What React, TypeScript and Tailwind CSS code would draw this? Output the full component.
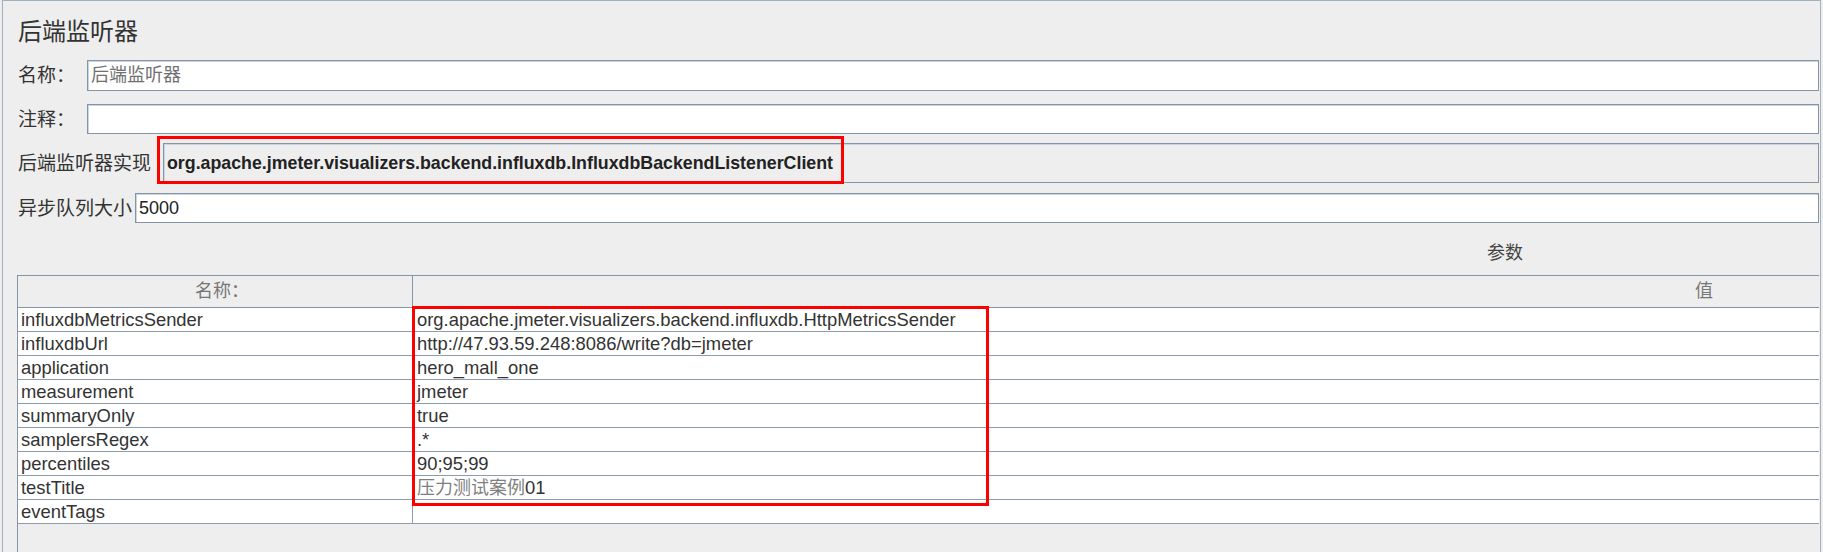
const rows: [string, string][] = [
  ["influxdbMetricsSender", "org.apache.jmeter.visualizers.backend.influxdb.HttpMetricsSender"],
  ["influxdbUrl", "http://47.93.59.248:8086/write?db=jmeter"],
  ["application", "hero_mall_one"],
  ["measurement", "jmeter"],
  ["summaryOnly", "true"],
  ["samplersRegex", ".*"],
  ["percentiles", "90;95;99"],
  ["testTitle", "__CJK__"],
  ["eventTags", ""],
];

const field = "border border-[#8495a7] shadow-[inset_1px_1px_0_#c9d5e1]";

export default function App() {
  return (
    <div className="relative h-[552px] w-[1823px] overflow-hidden bg-[#eeeeee] font-['Liberation_Sans','Noto_Sans_CJK_SC',sans-serif] text-[#333333]">
      <div className="ml-[2px] flex h-full w-[1819px] flex-col border-l border-r border-t border-[#a3b1bf] pl-[15px] pr-[1px]">
        {/* Title */}
        <div className="mt-[15px] flex h-[32px] items-center text-[24px] leading-none text-[#333]">后端监听器</div>

        {/* 名称 */}
        <div className="mt-[12px] flex h-[31px] items-center">
          <span className="w-[69px] text-[19px] leading-none">名称：</span>
          <div className={`flex h-full flex-1 items-center bg-white pl-[3px] text-[18px] text-[#707070] ${field}`}>
            后端监听器
          </div>
        </div>

        {/* 注释 */}
        <div className="mt-[13px] flex h-[30px] items-center">
          <span className="w-[69px] text-[19px] leading-none">注释：</span>
          <div className={`h-full flex-1 bg-white ${field}`} />
        </div>

        {/* 实现 */}
        <div className="mt-[9px] flex h-[40px] items-center">
          <span className="w-[145px] text-[19px] leading-none">后端监听器实现</span>
          <div className={`flex h-full flex-1 items-center bg-[#eeeeee] pl-[3px] text-[17.8px] font-bold text-[#222] ${field}`}>
            org.apache.jmeter.visualizers.backend.influxdb.InfluxdbBackendListenerClient
          </div>
        </div>

        {/* 队列大小 */}
        <div className="mt-[10px] flex h-[30px] items-center">
          <span className="w-[117px] text-[19px] leading-none">异步队列大小</span>
          <div className={`flex h-full flex-1 items-center bg-white pl-[3px] text-[18px] text-[#222] ${field}`}>
            5000
          </div>
        </div>

        {/* 参数 */}
        <div className="h-[52px] pl-[1469px] pt-[19px] text-[18px] leading-[22px] text-[#444]">参数</div>

        {/* Table */}
        <div className="-ml-[1px] flex-1 border-l border-[#8495a7]">
          <div className="flex h-[33px] border-b border-t border-[#8495a7] bg-[#eeeeee] text-[18px] text-[#777]">
            <div className="flex w-[395px] items-center border-r border-[#8495a7] pl-[177px]">名称：</div>
            <div className="flex flex-1 items-center pl-[1282px]">值</div>
          </div>
          {rows.map(([k, v]) => (
            <div key={k} className="flex h-[24px] border-b border-[#8d9db0] bg-white text-[18.4px] leading-[23px]">
              <div className="w-[395px] border-r border-[#8d9db0] pl-[3px]">{k}</div>
              <div className="flex-1 pl-[4px]">
                {v === "__CJK__" ? (
                  <>
                    <span className="text-[18px] text-[#808080]">压力测试案例</span>
                    <span>01</span>
                  </>
                ) : (
                  v
                )}
              </div>
            </div>
          ))}
        </div>
      </div>

      {/* annotation boxes */}
      <div className="pointer-events-none absolute left-[157px] top-[136px] h-[48px] w-[687px] border-[3px] border-[#ff0000]" />
      <div className="pointer-events-none absolute left-[412px] top-[306px] h-[200px] w-[577px] border-[3px] border-[#ff0000]" />
    </div>
  );
}
